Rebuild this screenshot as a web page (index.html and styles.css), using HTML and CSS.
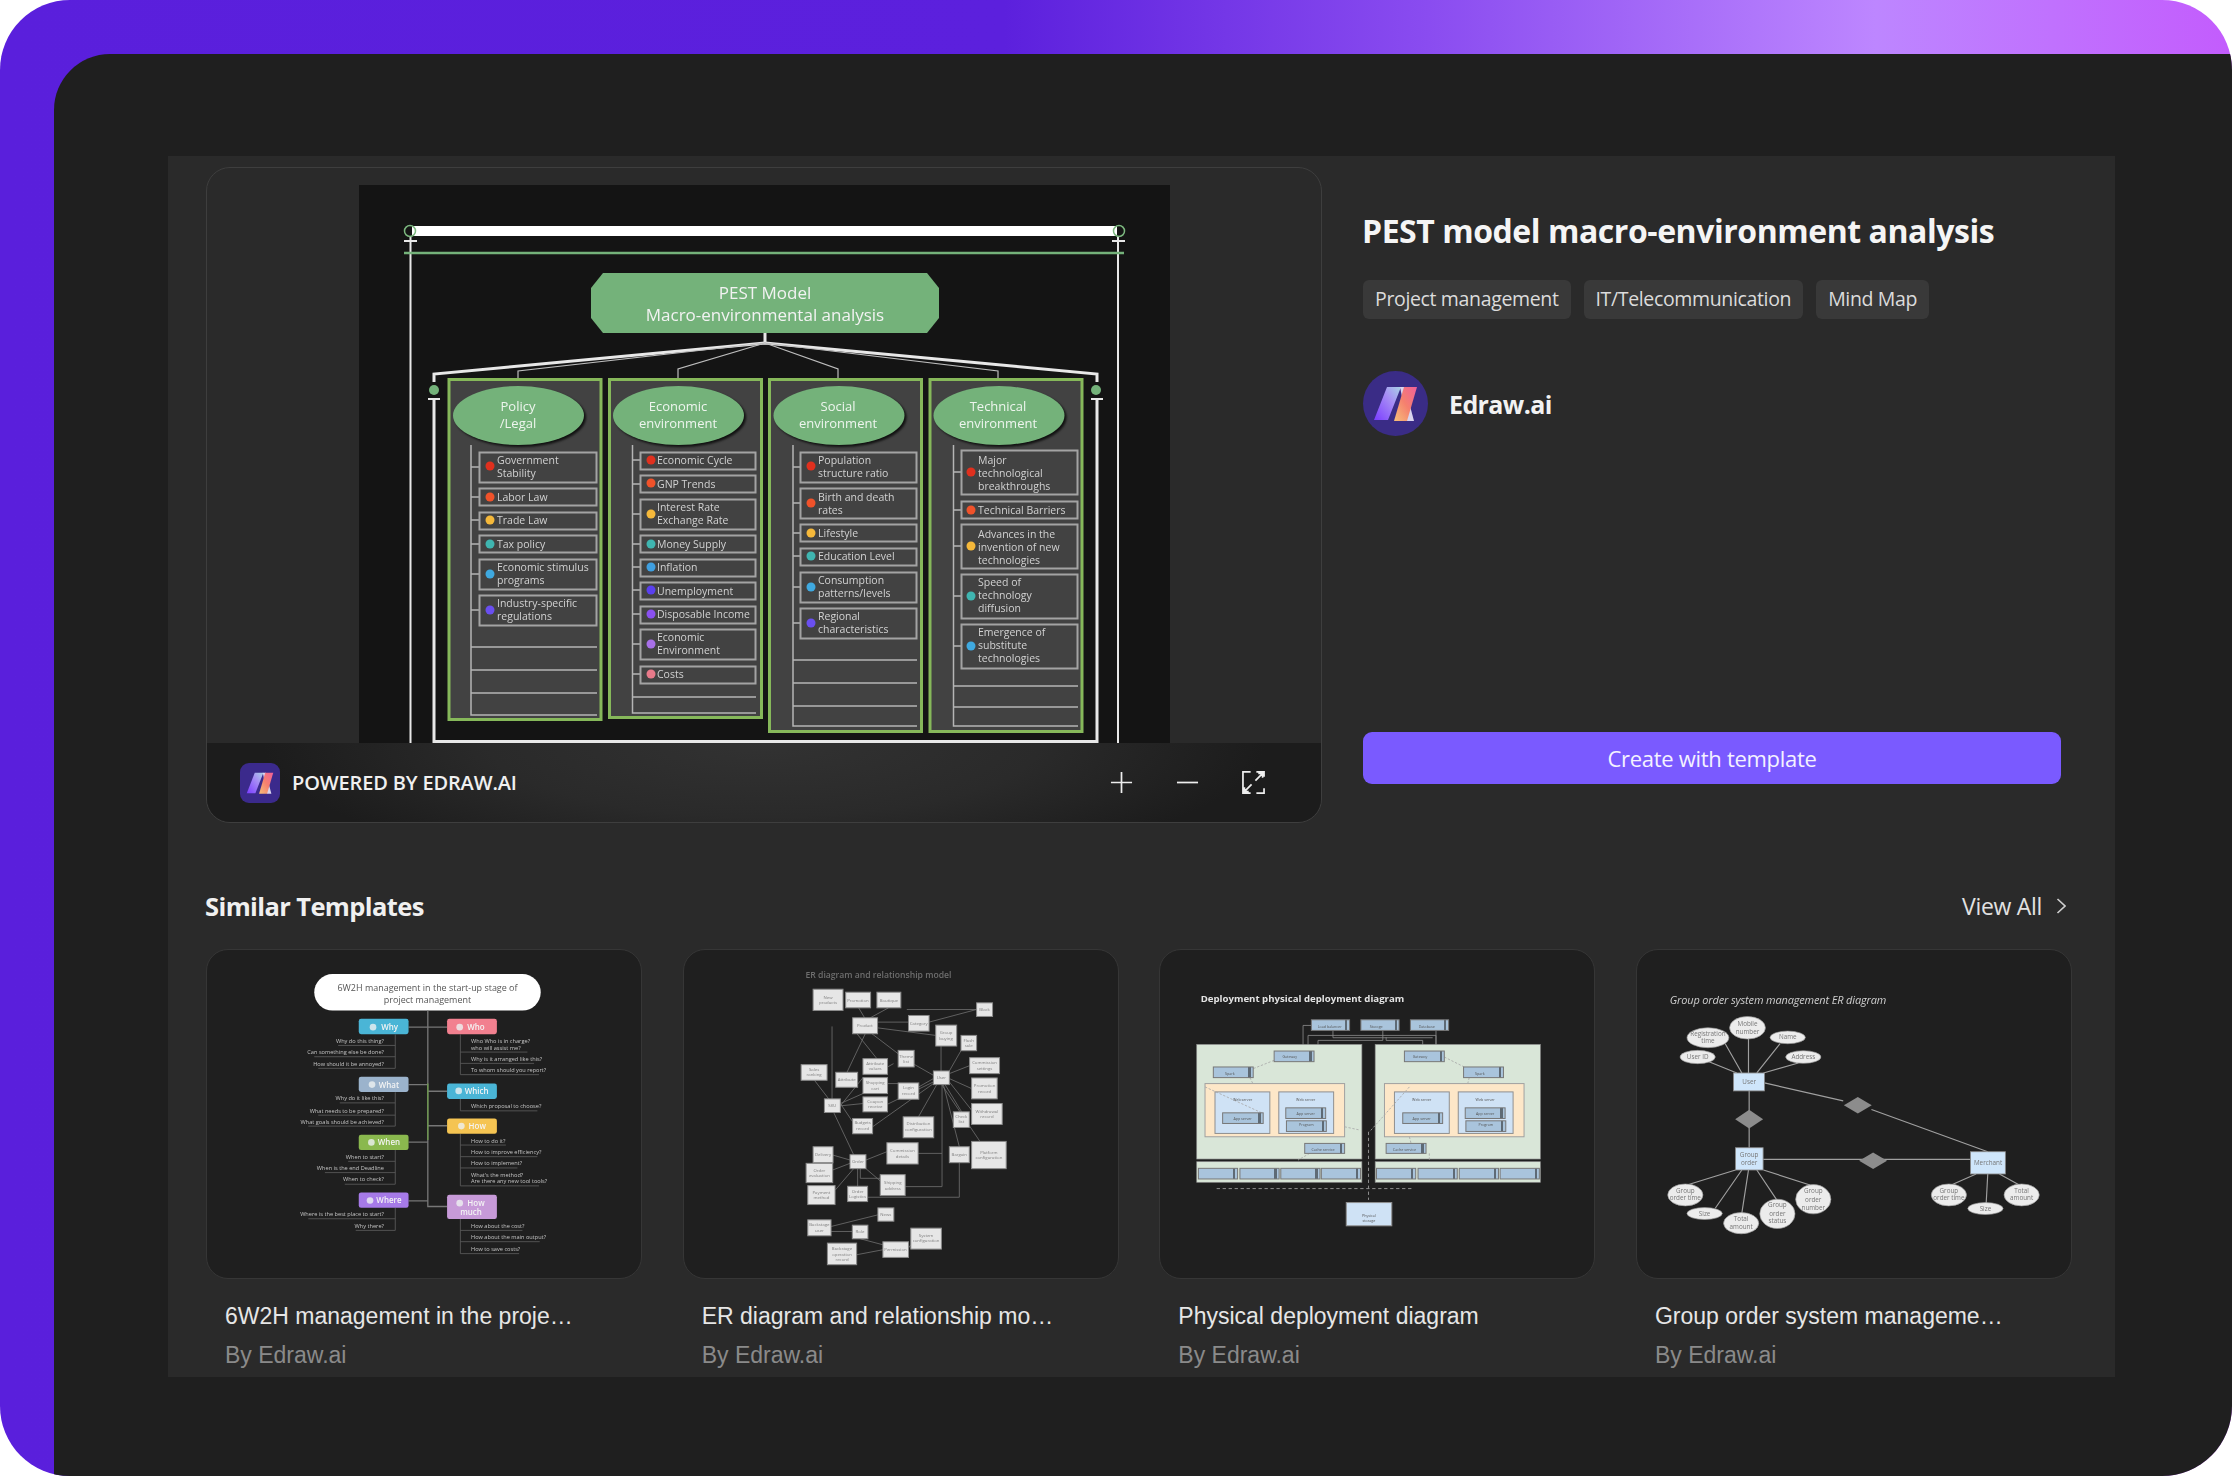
FILE: index.html
```html
<!DOCTYPE html>
<html lang="en">
<head>
<meta charset="utf-8">
<title>PEST model macro-environment analysis</title>
<link rel="stylesheet" href="styles.css">
</head>
<body>
<svg class="defs" aria-hidden="true">
  <defs>
    <linearGradient id="barA" x1="0" y1="1" x2="1" y2="0"><stop offset="0" stop-color="#7a3cff"/><stop offset=".6" stop-color="#a68cf5"/><stop offset="1" stop-color="#a9d3e6"/></linearGradient>
    <linearGradient id="barB" x1="0" y1="1" x2="1" y2="0"><stop offset="0" stop-color="#f6c07a"/><stop offset=".5" stop-color="#f5806e"/><stop offset="1" stop-color="#f0609a"/></linearGradient>
    <linearGradient id="depBar"><stop offset="0" stop-color="#a9c4dc"/><stop offset=".88" stop-color="#a9c4dc"/><stop offset=".88" stop-color="#5e6a75"/><stop offset=".94" stop-color="#5e6a75"/><stop offset=".94" stop-color="#a9c4dc"/><stop offset="1" stop-color="#a9c4dc"/></linearGradient>
    <symbol id="logo" viewBox="0 0 65 65">
      <path d="M11 49 24 16H38L25 49Z" fill="url(#barA)"/>
      <path d="M37 16H42L51 50H44Z" fill="#d9d4ee"/>
      <path d="M41 16H54L44 50H31Z" fill="url(#barB)"/>
    </symbol>
  </defs>
</svg>
<div class="frame">
  <main class="shell">
    <div class="panel">
      <section class="hero">
        <div class="preview">
          <div class="stage">
            <svg class="diagram" viewBox="359 185 811 558" aria-label="PEST model diagram">
              <g fill="none" stroke="#e8e8e8">
                <path d="M410.500 236V743M1118 236V743" stroke-width="2"/>
                <path d="M404 241H417M1112 241H1125" stroke-width="2"/>
                <path d="M434 398V741.500H1097V398" stroke-width="3"/>
                <path d="M434 382V374L765 343L1097 374V382" stroke-width="3"/>
                <path d="M765 333V343" stroke-width="3"/>
                <path d="M428 399H440M1091 399H1103" stroke-width="2"/>
                <path d="M518 379V371L765 343M678 379V369L765 343M838 379V369L765 343M998 379V371L765 343" stroke-width="1.200" stroke="#bdbdbd"/>
              </g>
              <rect x="412" y="226" width="705" height="10" fill="#fff"/>
              <circle cx="410" cy="231" r="5.500" fill="none" stroke="#7cb87f" stroke-width="1.500"/>
              <circle cx="1119" cy="231" r="5.500" fill="none" stroke="#7cb87f" stroke-width="1.500"/>
              <path d="M404 253H1124" stroke="#74b27a" stroke-width="2.500"/>
              <circle cx="434" cy="390" r="5" fill="#74b27a"/>
              <circle cx="1096" cy="390" r="5" fill="#74b27a"/>
              <path class="octa" d="M603 273H927L939 288V318L927 333H603L591 318V288Z"/>
              <text class="hd" x="765" y="299">PEST Model</text>
              <text class="hd" x="765" y="321">Macro-environmental analysis</text>

              <g class="col">
                <rect x="449" y="379.500" width="152" height="340"/>
                <rect x="609.500" y="379.500" width="152" height="338"/>
                <rect x="769.500" y="379.500" width="152" height="352"/>
                <rect x="930" y="379.500" width="152" height="352"/>
              </g>
              <g class="oval">
                <ellipse cx="518.500" cy="415.500" rx="65.500" ry="29.500"/>
                <ellipse cx="678.500" cy="415.500" rx="65.500" ry="29.500"/>
                <ellipse cx="839" cy="415.500" rx="65.500" ry="29.500"/>
                <ellipse cx="999" cy="415.500" rx="65.500" ry="29.500"/>
              </g>
              <g class="ovt">
                <text x="518" y="411">Policy</text><text x="518" y="428">/Legal</text>
                <text x="678" y="411">Economic</text><text x="678" y="428">environment</text>
                <text x="838" y="411">Social</text><text x="838" y="428">environment</text>
                <text x="998" y="411">Technical</text><text x="998" y="428">environment</text>
              </g>

              <g class="rail">
                <path d="M471 445V715H597M632.500 445V713H756M793 445V726H917M953.500 445V726H1078"/>
                <path d="M471 647H597M471 670H597M471 693H597M632.500 697H756M793 660H917M793 683H917M793 706H917M953.500 686H1078M953.500 707H1078"/>
                <path d="M471 467H479M471 497H479M471 520H479M471 544H479M471 574H479M471 610H479M632.500 460H640M632.500 484H640M632.500 514H640M632.500 544H640M632.500 567H640M632.500 590H640M632.500 614H640M632.500 644H640M632.500 674H640M793 467H800M793 503H800M793 533H800M793 556H800M793 587H800M793 623H800M953.500 472H961M953.500 510H961M953.500 546H961M953.500 596H961M953.500 646H961"/>
              </g>
              <g class="box">
                <rect x="479.500" y="452.500" width="117" height="30"/><rect x="479.500" y="488.500" width="117" height="17"/><rect x="479.500" y="512.500" width="117" height="17"/><rect x="479.500" y="535.500" width="117" height="17"/><rect x="479.500" y="559.500" width="117" height="30"/><rect x="479.500" y="595.500" width="117" height="30"/>
                <rect x="640.500" y="452.500" width="115" height="17"/><rect x="640.500" y="475.500" width="115" height="17"/><rect x="640.500" y="499.500" width="115" height="30"/><rect x="640.500" y="535.500" width="115" height="17"/><rect x="640.500" y="559.500" width="115" height="17"/><rect x="640.500" y="582.500" width="115" height="17"/><rect x="640.500" y="606.500" width="115" height="17"/><rect x="640.500" y="629.500" width="115" height="30"/><rect x="640.500" y="666.500" width="115" height="17"/>
                <rect x="800.500" y="452.500" width="116" height="30"/><rect x="800.500" y="488.500" width="116" height="30"/><rect x="800.500" y="524.500" width="116" height="17"/><rect x="800.500" y="548.500" width="116" height="17"/><rect x="800.500" y="572.500" width="116" height="30"/><rect x="800.500" y="608.500" width="116" height="30"/>
                <rect x="961.500" y="450.500" width="116" height="44"/><rect x="961.500" y="501.500" width="116" height="17"/><rect x="961.500" y="524.500" width="116" height="44"/><rect x="961.500" y="574.500" width="116" height="44"/><rect x="961.500" y="624.500" width="116" height="44"/>
              </g>
              <g>
                <circle cx="490" cy="466" r="4.500" fill="#e0301e"/><circle cx="490" cy="497" r="4.500" fill="#f0522a"/><circle cx="490" cy="520" r="4.500" fill="#f5b83a"/><circle cx="490" cy="544" r="4.500" fill="#3fb5b0"/><circle cx="490" cy="574" r="4.500" fill="#3fa9e0"/><circle cx="490" cy="610" r="4.500" fill="#6a4ff0"/>
                <circle cx="651" cy="460" r="4.500" fill="#e0301e"/><circle cx="651" cy="483" r="4.500" fill="#f0522a"/><circle cx="651" cy="514" r="4.500" fill="#f5b83a"/><circle cx="651" cy="544" r="4.500" fill="#3fb5b0"/><circle cx="651" cy="567" r="4.500" fill="#3f9fe0"/><circle cx="651" cy="590" r="4.500" fill="#5a40f0"/><circle cx="651" cy="614" r="4.500" fill="#8a50f0"/><circle cx="651" cy="644" r="4.500" fill="#a870e8"/><circle cx="651" cy="674" r="4.500" fill="#e87a8a"/>
                <circle cx="811" cy="466" r="4.500" fill="#e0301e"/><circle cx="811" cy="503" r="4.500" fill="#f0522a"/><circle cx="811" cy="533" r="4.500" fill="#f5b83a"/><circle cx="811" cy="556" r="4.500" fill="#3fb5b0"/><circle cx="811" cy="587" r="4.500" fill="#3fa9e0"/><circle cx="811" cy="623" r="4.500" fill="#6a4ff0"/>
                <circle cx="971" cy="472" r="4.500" fill="#e0301e"/><circle cx="971" cy="510" r="4.500" fill="#f0522a"/><circle cx="971" cy="546" r="4.500" fill="#f5b83a"/><circle cx="971" cy="596" r="4.500" fill="#3fb5b0"/><circle cx="971" cy="646" r="4.500" fill="#3fa9e0"/>
              </g>
              <g class="it">
                <text x="497" y="464">Government</text><text x="497" y="477">Stability</text><text x="497" y="501">Labor Law</text><text x="497" y="524">Trade Law</text><text x="497" y="548">Tax policy</text><text x="497" y="571">Economic stimulus</text><text x="497" y="584">programs</text><text x="497" y="607">Industry-specific</text><text x="497" y="620">regulations</text>
                <text x="657" y="464">Economic Cycle</text><text x="657" y="488">GNP Trends</text><text x="657" y="511">Interest Rate</text><text x="657" y="524">Exchange Rate</text><text x="657" y="548">Money Supply</text><text x="657" y="571">Inflation</text><text x="657" y="595">Unemployment</text><text x="657" y="618">Disposable Income</text><text x="657" y="641">Economic</text><text x="657" y="654">Environment</text><text x="657" y="678">Costs</text>
                <text x="818" y="464">Population</text><text x="818" y="477">structure ratio</text><text x="818" y="501">Birth and death</text><text x="818" y="514">rates</text><text x="818" y="537">Lifestyle</text><text x="818" y="560">Education Level</text><text x="818" y="584">Consumption</text><text x="818" y="597">patterns/levels</text><text x="818" y="620">Regional</text><text x="818" y="633">characteristics</text>
                <text x="978" y="464">Major</text><text x="978" y="477">technological</text><text x="978" y="490">breakthroughs</text><text x="978" y="514">Technical Barriers</text><text x="978" y="538">Advances in the</text><text x="978" y="551">invention of new</text><text x="978" y="564">technologies</text><text x="978" y="586">Speed of</text><text x="978" y="599">technology</text><text x="978" y="612">diffusion</text><text x="978" y="636">Emergence of</text><text x="978" y="649">substitute</text><text x="978" y="662">technologies</text>
              </g>
            </svg>
          </div>
          <div class="toolbar">
            <svg class="toolbar-logo"><use href="#logo"/></svg>
            <span class="powered">POWERED BY EDRAW.AI</span>
            <div class="tools">
              <svg class="tool" viewBox="0 0 24 24"><path d="M12 1V23M1 12H23"/></svg>
              <svg class="tool" viewBox="0 0 24 24"><path d="M1 12H23"/></svg>
              <svg class="tool" viewBox="0 0 24 24"><path d="M9 1H1V23H9M15 1H23V6M23 18V23H15M14 10 21 3M17 2.500H21.500V7M10 14 3 21M7 21.500H2.500V17"/></svg>
            </div>
          </div>
        </div>
        <aside class="info">
          <h1 class="title">PEST model macro-environment analysis</h1>
          <div class="tags">
            <span class="tag">Project management</span>
            <span class="tag">IT/Telecommunication</span>
            <span class="tag">Mind Map</span>
          </div>
          <div class="author">
            <svg class="avatar"><use href="#logo"/></svg>
            <span class="author-name">Edraw.ai</span>
          </div>
          <button class="cta">Create with template</button>
        </aside>
      </section>

      <section class="similar">
        <header class="similar-head">
          <h2 class="similar-title">Similar Templates</h2>
          <a class="view-all">View All
            <svg class="chev" viewBox="0 0 10 16"><path d="M1.500 1 9 8 1.500 15"/></svg>
          </a>
        </header>
        <div class="cards">
          <article class="card">
            <div class="thumb">
              <svg class="thumb-art" viewBox="20 28 1307 987" aria-label="6W2H mind map">
                <rect x="343" y="100" width="682" height="110" rx="55" fill="#fff"/>
                <text class="t1 mid" x="684" y="150">6W2H management in the start-up stage of</text>
                <text class="t1 mid" x="684" y="187">project management</text>
                <path d="M685 210V800H743M627 260H685M743 260H685M627 433H685M743 453H685M627 606H685M743 557H685M627 783H685" fill="none" stroke="#777" stroke-width="4"/>
                <path d="M685 430V600" stroke="#6f9c4e" stroke-width="4"/>
                <g class="wires">
                  <path d="M587 282V384H355M587 315H415M587 349H343M587 456V558H325M587 488H420M587 525H355M587 630V733H435M587 664H445M587 698H375M587 804V872H468M587 837H325"/>
                  <path d="M783 282V403H1020M783 335H985M783 369H1005M783 476V512H1015M783 581V738H1020M783 615H920M783 650H1015M783 684H955M783 838V942H960M783 872H970M783 906H1022"/>
                </g>
                <rect x="477" y="235" width="150" height="46" rx="7" fill="#4ab5d6"/><rect x="477" y="409" width="150" height="46" rx="7" fill="#9bb3cc"/><rect x="477" y="584" width="150" height="46" rx="7" fill="#8ab84e"/><rect x="477" y="758" width="150" height="46" rx="7" fill="#a67ae8"/>
                <rect x="743" y="235" width="150" height="46" rx="7" fill="#f2808f"/><rect x="743" y="430" width="150" height="46" rx="7" fill="#4ab5d6"/><rect x="743" y="535" width="150" height="46" rx="7" fill="#f5c452"/><rect x="743" y="765" width="150" height="73" rx="7" fill="#c79ad8"/>
                <g fill="#eef2f2" opacity=".8"><circle cx="520" cy="260" r="10"/><circle cx="517" cy="433" r="10"/><circle cx="515" cy="607" r="10"/><circle cx="511" cy="782" r="10"/><circle cx="781" cy="260" r="10"/><circle cx="778" cy="452" r="10"/><circle cx="786" cy="558" r="10"/><circle cx="781" cy="790" r="10"/></g>
                <g class="t2 mid">
                  <text x="570" y="268">Why</text><text x="568" y="442">What</text><text x="568" y="615">When</text><text x="568" y="790">Where</text>
                  <text x="830" y="268">Who</text><text x="832" y="462">Which</text><text x="834" y="567">How</text><text x="830" y="798">How</text><text x="815" y="826">much</text>
                </g>
                <g class="t3 end">
                  <text x="553" y="307">Why do this thing?</text><text x="553" y="342">Can something else be done?</text><text x="553" y="376">How should it be annoyed?</text>
                  <text x="553" y="480">Why do it like this?</text><text x="553" y="517">What needs to be prepared?</text><text x="553" y="552">What goals should be achieved?</text>
                  <text x="553" y="656">When to start?</text><text x="553" y="690">When is the end Deadline</text><text x="553" y="724">When to check?</text>
                  <text x="553" y="829">Where is the best place to start?</text><text x="553" y="864">Why there?</text>
                </g>
                <g class="t3">
                  <text x="815" y="307">Who Who is in charge?</text><text x="815" y="328">who will assist me?</text><text x="815" y="361">Why is it arranged like this?</text><text x="815" y="395">To whom should you report?</text>
                  <text x="815" y="503">Which proposal to choose?</text>
                  <text x="815" y="608">How to do it?</text><text x="815" y="642">How to improve efficiency?</text><text x="815" y="676">How to implement?</text><text x="815" y="710">What's the method?</text><text x="815" y="730">Are there any new tool tools?</text>
                  <text x="815" y="865">How about the cost?</text><text x="815" y="899">How about the main output?</text><text x="815" y="933">How to save costs?</text>
                </g>
              </svg>
            </div>
            <h3 class="card-title">6W2H management in the proje…</h3>
            <p class="card-by">By Edraw.ai</p>
          </article>

          <article class="card">
            <div class="thumb">
              <svg class="thumb-art" viewBox="10 28 1305 987" aria-label="ER diagram">
                <text class="er-title" x="375" y="111">ER diagram and relationship model</text>
                <g fill="none" stroke="#6e6e6e" stroke-width="2.500">
                  <path d="M535 202 553 232M625 202 570 232M590 245H685M590 262 767 285M680 207H890M747 245 890 207M455 258V476M555 280 500 396M575 280 680 360M530 280 590 355M622 380 640 370M702 372 760 405M760 415 716 440M622 430H654M585 510 760 425M577 560 760 430M402 420 445 476M480 490 517 545M480 497 548 412M480 490 548 460M480 497 548 490M460 517 520 644M783 317V392M843 331 808 392M808 400 869 376M808 415 875 445M808 425 875 510M795 433 845 515M790 433 838 620M785 433 900 604M770 433 715 530M786 433V740H675M714 640H786M557 660 620 635M457 645 509 660M457 690 509 670M465 750 520 686M532 686V739M540 686V715H600M550 680 620 740M562 772H838V668M452 860 593 825M540 897 608 915M529 945 608 930M452 875 516 875M685 925 692 915"/>
                </g>
                <g class="er-box">
                  <rect x="398" y="146" width="90" height="64"/><rect x="496" y="155" width="75" height="47"/><rect x="590" y="155" width="72" height="47"/><rect x="890" y="187" width="48" height="41"/><rect x="517" y="232" width="75" height="48"/><rect x="685" y="225" width="62" height="47"/><rect x="767" y="254" width="63" height="63"/><rect x="843" y="285" width="47" height="46"/><rect x="654" y="330" width="48" height="50"/><rect x="869" y="352" width="90" height="48"/><rect x="362" y="373" width="78" height="47"/><rect x="548" y="355" width="74" height="47"/><rect x="466" y="396" width="66" height="45"/><rect x="760" y="392" width="48" height="41"/><rect x="875" y="413" width="77" height="63"/><rect x="548" y="412" width="74" height="48"/><rect x="654" y="428" width="62" height="49"/><rect x="432" y="476" width="48" height="41"/><rect x="548" y="470" width="74" height="45"/><rect x="875" y="490" width="92" height="63"/><rect x="820" y="515" width="48" height="47"/><rect x="517" y="535" width="60" height="46"/><rect x="669" y="530" width="92" height="63"/><rect x="620" y="608" width="94" height="64"/><rect x="808" y="620" width="60" height="48"/><rect x="875" y="604" width="104" height="82"/><rect x="398" y="620" width="60" height="48"/><rect x="509" y="644" width="48" height="42"/><rect x="377" y="670" width="80" height="58"/><rect x="600" y="704" width="75" height="63"/><rect x="382" y="737" width="82" height="57"/><rect x="502" y="739" width="60" height="46"/><rect x="593" y="804" width="48" height="40"/><rect x="382" y="840" width="70" height="48"/><rect x="516" y="856" width="47" height="41"/><rect x="692" y="865" width="92" height="63"/><rect x="608" y="906" width="77" height="47"/><rect x="441" y="910" width="88" height="65"/>
                </g>
                <g class="er-t mid">
                  <text x="443" y="175">New</text><text x="443" y="191">products</text><text x="533" y="183">Promotion</text><text x="626" y="183">Boutique</text><text x="914" y="213">Black</text><text x="554" y="261">Product</text><text x="716" y="253">Category</text><text x="798" y="282">Group</text><text x="798" y="298">buying</text><text x="866" y="304">Flash</text><text x="866" y="320">sale</text><text x="678" y="352">Theme</text><text x="678" y="368">list</text><text x="914" y="372">Commission</text><text x="914" y="388">settings</text><text x="401" y="392">Sales</text><text x="401" y="408">ranking</text><text x="585" y="374">Attribute</text><text x="585" y="390">values</text><text x="499" y="423">Attribute</text><text x="784" y="417">User</text><text x="914" y="441">Promotion</text><text x="914" y="457">record</text><text x="585" y="432">Shopping</text><text x="585" y="448">cart</text><text x="685" y="447">Login</text><text x="685" y="463">record</text><text x="456" y="501">SKU</text><text x="585" y="488">Coupon</text><text x="585" y="504">receive</text><text x="921" y="519">Withdrawal</text><text x="921" y="535">record</text><text x="844" y="533">Check</text><text x="844" y="549">list</text><text x="547" y="553">Budgets</text><text x="547" y="569">record</text><text x="715" y="556">Distribution</text><text x="715" y="574">configuration</text><text x="667" y="637">Commission</text><text x="667" y="653">details</text><text x="838" y="649">Bargain</text><text x="927" y="641">Platform</text><text x="927" y="657">configuration</text><text x="428" y="649">Delivery</text><text x="533" y="670">Order</text><text x="417" y="696">Order</text><text x="417" y="712">evaluation</text><text x="638" y="732">Shipping</text><text x="638" y="750">address</text><text x="423" y="762">Payment</text><text x="423" y="778">method</text><text x="532" y="758">Order</text><text x="532" y="774">Logistics</text><text x="617" y="829">News</text><text x="417" y="860">Backstage</text><text x="417" y="876">user</text><text x="539" y="881">Role</text><text x="738" y="892">System</text><text x="738" y="908">configuration</text><text x="646" y="934">Permission</text><text x="485" y="932">Backstage</text><text x="485" y="948">operation</text><text x="485" y="964">record</text>
                </g>
              </svg>
            </div>
            <h3 class="card-title">ER diagram and relationship mo…</h3>
            <p class="card-by">By Edraw.ai</p>
          </article>

          <article class="card">
            <div class="thumb">
              <svg class="thumb-art" viewBox="30 28 1305 987" aria-label="Deployment diagram">
                <text class="dep-title" x="152" y="184">Deployment physical deployment diagram</text>
                <path d="M460 255H485M460 255V325M475 325V285H860V325M550 270V292H850M700 270V300H505V325M710 290V300H820V325M860 270V325" fill="none" stroke="#8a8a8a" stroke-width="2.500"/>
                <g class="dep-green"><rect x="140" y="312" width="497" height="345"/><rect x="677" y="312" width="497" height="345"/><rect x="140" y="665" width="497" height="62"/><rect x="677" y="665" width="497" height="62"/></g>
                <g class="dep-orange"><rect x="165" y="430" width="420" height="160"/><rect x="705" y="430" width="420" height="160"/></g>
                <g class="dep-node"><rect x="195" y="455" width="165" height="125"/><rect x="387" y="455" width="165" height="125"/><rect x="735" y="455" width="165" height="125"/><rect x="927" y="455" width="165" height="125"/><rect x="590" y="788" width="137" height="70"/></g>
                <path d="M373 360 310 385M885 350 945 380M165 440 340 520M780 440 660 575M585 560 632 570M300 412 310 432M960 412 955 432M480 640 445 660M780 590 785 610M840 640 840 660" fill="none" stroke="#a8a8a8" stroke-width="2.500" stroke-dasharray="7 5"/>
                <g class="dep-small">
                  <rect x="485" y="238" width="115" height="32"/><rect x="634" y="238" width="115" height="32"/><rect x="783" y="238" width="115" height="32"/>
                  <rect x="373" y="332" width="120" height="32"/><rect x="190" y="380" width="120" height="32"/><rect x="765" y="332" width="120" height="32"/><rect x="943" y="380" width="120" height="32"/>
                  <rect x="218" y="518" width="122" height="32"/><rect x="408" y="503" width="120" height="32"/><rect x="410" y="542" width="120" height="32"/><rect x="760" y="518" width="120" height="32"/><rect x="948" y="503" width="120" height="32"/><rect x="950" y="542" width="120" height="32"/><rect x="465" y="610" width="120" height="30"/><rect x="710" y="610" width="120" height="30"/>
                  <rect x="145" y="685" width="118" height="32"/><rect x="270" y="685" width="118" height="32"/><rect x="393" y="685" width="118" height="32"/><rect x="515" y="685" width="118" height="32"/><rect x="681" y="685" width="118" height="32"/><rect x="806" y="685" width="118" height="32"/><rect x="930" y="685" width="118" height="32"/><rect x="1053" y="685" width="118" height="32"/>
                </g>
                <path d="M200 746H790M657 575V780" fill="none" stroke="#8f8f8f" stroke-width="3" stroke-dasharray="10 8"/>
                <g class="dep-t mid">
                  <text x="540" y="263">Load balancer</text><text x="680" y="263">Storage</text><text x="832" y="263">Database</text>
                  <text x="420" y="353">Gateway</text><text x="240" y="403">Spark</text><text x="812" y="353">Gateway</text><text x="992" y="403">Spark</text>
                  <text x="278" y="481">Web server</text><text x="468" y="481">Web server</text><text x="817" y="481">Web server</text><text x="1008" y="481">Web server</text>
                  <text x="278" y="539">App server</text><text x="468" y="525">App server</text><text x="470" y="559">Program</text><text x="817" y="539">App server</text><text x="1008" y="525">App server</text><text x="1010" y="559">Program</text>
                  <text x="520" y="632">Cache service</text><text x="765" y="632">Cache service</text><text x="658" y="830">Physical</text><text x="658" y="846">storage</text>
                </g>
              </svg>
            </div>
            <h3 class="card-title">Physical deployment diagram</h3>
            <p class="card-by">By Edraw.ai</p>
          </article>

          <article class="card">
            <div class="thumb">
              <svg class="thumb-art" viewBox="20 208 1305 987" aria-label="Group order ER diagram">
                <text class="grp-title" x="118" y="370">Group order system management ER diagram</text>
                <g fill="none" stroke="#a0a0a0" stroke-width="3.500">
                  <path d="M225 540 320 578M285 490 335 578M355 475V578M450 490 380 578M505 548 400 578M357 632V803M403 608 640 662M725 688 1075 815M399 838H1023M316 870 170 915M335 870 255 985M355 870 335 1000M380 870 440 960M400 870 540 915M1040 882 965 915M1075 882 1070 975M1110 882 1170 915"/>
                </g>
                <g class="grp-e">
                  <ellipse cx="202" cy="530" rx="53" ry="20"/><ellipse cx="233" cy="472" rx="63" ry="30"/><ellipse cx="352" cy="442" rx="54" ry="34"/><ellipse cx="473" cy="471" rx="53" ry="19"/><ellipse cx="520" cy="530" rx="53" ry="19"/>
                  <ellipse cx="165" cy="945" rx="53" ry="33"/><ellipse cx="223" cy="1001" rx="53" ry="18"/><ellipse cx="333" cy="1030" rx="53" ry="32"/><ellipse cx="442" cy="1002" rx="53" ry="44"/><ellipse cx="550" cy="958" rx="53" ry="44"/>
                  <ellipse cx="958" cy="945" rx="53" ry="33"/><ellipse cx="1068" cy="986" rx="53" ry="18"/><ellipse cx="1177" cy="945" rx="53" ry="33"/>
                </g>
                <g fill="#cfe6fb" stroke="#8a8a8a" stroke-width="2.500"><rect x="310" y="578" width="93" height="54"/><rect x="316" y="803" width="83" height="67"/><rect x="1023" y="815" width="105" height="67"/></g>
                <g fill="#8c8c8c"><path d="M642 675 684 650 726 675 684 700Z"/><path d="M315 717 357 689 399 717 357 745Z"/><path d="M688 842 730 817 772 842 730 867Z"/></g>
                <g class="grp-t mid">
                  <text x="202" y="536">User ID</text><text x="233" y="467">Registration</text><text x="233" y="489">time</text><text x="352" y="436">Mobile</text><text x="352" y="462">number</text><text x="473" y="477">Name</text><text x="520" y="536">Address</text>
                  <text x="357" y="612">User</text><text x="357" y="832">Group</text><text x="357" y="854">order</text><text x="1076" y="854">Merchant</text>
                  <text x="165" y="939">Group</text><text x="165" y="961">order time</text><text x="223" y="1007">Size</text><text x="333" y="1024">Total</text><text x="333" y="1048">amount</text><text x="442" y="981">Group</text><text x="442" y="1007">order</text><text x="442" y="1031">status</text><text x="550" y="939">Group</text><text x="550" y="965">order</text><text x="550" y="990">number</text>
                  <text x="958" y="939">Group</text><text x="958" y="961">order time</text><text x="1068" y="992">Size</text><text x="1177" y="939">Total</text><text x="1177" y="961">amount</text>
                </g>
              </svg>
            </div>
            <h3 class="card-title">Group order system manageme…</h3>
            <p class="card-by">By Edraw.ai</p>
          </article>
        </div>
      </section>
    </div>
  </main>
</div>
</body>
</html>
```
FILE: styles.css
```css
* { box-sizing: border-box; }
html, body { margin: 0; padding: 0; background: #fff; }
body { width: 2232px; height: 1476px; overflow: hidden; font-family: "Open Sans", "Noto Sans", sans-serif; }
.defs { position: absolute; width: 0; height: 0; }

.frame {
  width: 2232px; height: 1476px; padding: 54px 0 0 54px; overflow: hidden;
  border-radius: 70px;
  background: linear-gradient(90deg, #5a1fdc 0, #5c20dd 45%, #8a4cf0 64%, #bd86ff 84%, #c35cfd 100%);
}
.shell {
  height: 100%; padding: 102px 117px 0 114px;
  background: #1f1f1f; border-top-left-radius: 56px;
}
.panel { height: 1221px; padding: 11px 0 0 38px; background: #2a2a2a; overflow: hidden; }

.hero { display: flex; gap: 41px; height: 656px; }
.preview {
  width: 1116px; flex: none; display: flex; flex-direction: column;
  background: #2a2a2a; border: 1.5px solid #3e3e3e; border-radius: 24px; overflow: hidden;
}
.stage { height: 575px; padding-top: 17px; display: flex; justify-content: center; }
.diagram { width: 811px; height: 558px; background: #141414; display: block; filter: blur(.35px); }
.diagram text { font-family: "Open Sans", sans-serif; }
.octa { fill: #74b27a; }
.hd { fill: #f2f2f2; font-size: 17px; text-anchor: middle; }
.col rect { fill: #424242; stroke: #86b85a; stroke-width: 3; }
.oval ellipse { fill: #74b27a; filter: drop-shadow(2px 2px 1px #111); }
.ovt text { fill: #eef5ee; font-size: 13px; text-anchor: middle; }
.rail path { fill: none; stroke: #b5b5b5; stroke-width: 1.500; }
.box rect { fill: none; stroke: #a3a3a3; stroke-width: 2; }
.it text { fill: #d2d2d2; font-size: 10.500px; }

.toolbar {
  flex: 1; display: flex; align-items: center; padding: 0 56px 0 33px;
  background: radial-gradient(ellipse 45% 170% at 50% 0, #323232 0, #2a2a2a 55%, #1c1c1c 100%);
}
.toolbar-logo { width: 40px; height: 40px; border-radius: 9px; background: #3b2a8c; flex: none; }
.powered { margin-left: 12px; color: #f0f0f0; font-size: 20px; font-weight: 600; letter-spacing: -.15px; }
.tools { margin-left: auto; display: flex; gap: 43px; }
.tool { width: 23px; height: 23px; fill: none; stroke: #eee; stroke-width: 1.800; }

.info { flex: none; width: 698px; display: flex; flex-direction: column; padding: 43px 0 39px; }
.title { margin: 0 0 0 -1px; color: #f5f5f5; font-size: 32px; line-height: 42px; font-weight: 700; letter-spacing: -.45px; white-space: nowrap; }
.tags { display: flex; gap: 13px; margin-top: 28px; }
.tag { height: 39px; line-height: 38px; padding: 0 12px; border-radius: 6px; background: #393939; color: #dcdcdc; font-size: 19.500px; letter-spacing: -.35px; white-space: nowrap; }
.author { display: flex; align-items: center; gap: 21px; margin-top: 52px; }
.avatar { width: 65px; height: 65px; border-radius: 50%; background: #3a2c86; flex: none; }
.author-name { color: #f2f2f2; font-size: 25px; font-weight: 700; letter-spacing: -.6px; }
.cta {
  margin-top: auto; width: 698px; height: 52px; border: 0; border-radius: 9px;
  background: #7a5aff; color: #f4f2ff; font: 500 22px "Open Sans", sans-serif; letter-spacing: -.3px;
}

.similar { width: 1866px; }
.similar-head { display: flex; align-items: center; justify-content: space-between; height: 126px; padding: 0 6px 2px 0; }
.similar-title { margin: 42px 0 0 -1px; color: #f0f0f0; font-size: 25.500px; line-height: 36px; font-weight: 700; letter-spacing: -.6px; }
.view-all { margin-top: 41px; display: flex; align-items: center; gap: 14px; color: #e2e2e2; font-size: 23px; font-weight: 500; letter-spacing: -.3px; }
.chev { width: 10px; height: 16px; fill: none; stroke: #cfcfcf; stroke-width: 1.600; }
.cards { display: grid; grid-template-columns: repeat(4, 436px); column-gap: 40.670px; }
.thumb { height: 330px; background: #1f1f1f; border: 1.5px solid #363636; border-radius: 22px; overflow: hidden; }
.thumb-art { display: block; width: 100%; height: 100%; filter: blur(.6px); }
.card-title { margin: 22px 0 0 19px; color: #e6e6e6; font: 400 23px/30px "Liberation Sans", Arial, sans-serif; white-space: nowrap; }
.card-by { margin: 9px 0 0 19px; color: #8a8a8a; font: 400 23px/30px "Liberation Sans", Arial, sans-serif; }

.thumb-art text { font-family: "Open Sans", sans-serif; }
.mid text, text.mid { text-anchor: middle; }
.end text { text-anchor: end; }
.t1 { fill: #555; font-size: 27px; }
.t2 text { fill: #f4f4f4; font-size: 24px; font-weight: 600; }
.t3 text { fill: #c4c4c4; font-size: 17px; }
.wires path { fill: none; stroke: #5d5d5d; stroke-width: 2.500; }
.er-title { fill: #6e6e6e; font-size: 26px; font-weight: 600; }
.er-box rect { fill: #e6e6e6; stroke: #8c8c8c; stroke-width: 3; }
.er-t text { fill: #808080; font-size: 13px; }
.dep-title { fill: #e4e4e4; font-size: 29px; font-weight: 700; }
.dep-green rect { fill: #d9e6d8; stroke: #8c8c8c; stroke-width: 2; }
.dep-orange rect { fill: #fde7c8; stroke: #a0a0a0; stroke-width: 3; }
.dep-node rect { fill: #cfe2f5; stroke: #8f8f8f; stroke-width: 3; }
.dep-small rect { fill: url(#depBar); stroke: #777; stroke-width: 3; }
.dep-t text { fill: #555; font-size: 11px; }
.grp-title { fill: #cfcfcf; font-size: 33px; font-style: italic; letter-spacing: -.4px; }
.grp-e ellipse { fill: #ececec; stroke: #999; stroke-width: 2; }
.grp-t text { fill: #777; font-size: 19px; }
```
